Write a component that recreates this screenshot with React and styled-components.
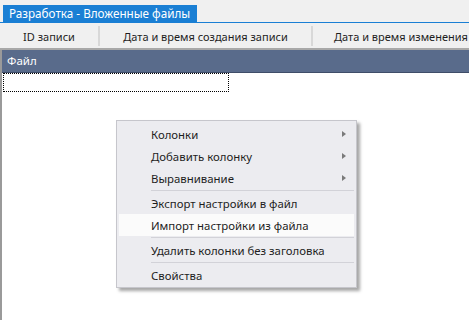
import React from "react";
import styled, { createGlobalStyle } from "styled-components";

const Global = createGlobalStyle`
  html, body { margin: 0; padding: 0; background: #ffffff; overflow: hidden; }
  * { box-sizing: border-box; }
  body { font-family: "Noto Sans", "Open Sans", sans-serif; }
`;

const Page = styled.div`
  position: relative;
  width: 469px;
  height: 320px;
  display: flex;
  flex-direction: column;
  overflow: hidden;
  font-size: 11.4px;
  color: #1e1e1e;
`;

const TabStrip = styled.div`
  height: 23px;
  flex: none;
  display: flex;
  align-items: flex-end;
  padding-left: 3px;
  background: #f0f0f0;
  border-bottom: 1px solid #1a7fd4;
`;

const Tab = styled.div`
  height: 17px;
  padding: 0 7px 0 6px;
  background: #1a7fd4;
  color: #ffffff;
  font-size: 11.7px;
  line-height: 17px;
  white-space: nowrap;
`;

const HeaderRow = styled.div`
  height: 27px;
  flex: none;
  display: flex;
  align-items: center;
  background: #f0f0f0;
  border-bottom: 2px solid #a8a8a8;
  overflow: hidden;
  font-size: 11px;
`;

const HeaderCell = styled.div`
  flex: none;
  width: ${(p) => p.$w}px;
  height: 20px;
  padding-top: 1px;
  line-height: 20px;
  text-align: center;
  white-space: nowrap;
  border-right: ${(p) => (p.$last ? "none" : "2px solid #d8d8d8")};
`;

const Body = styled.div`
  flex: 1;
  display: flex;
  flex-direction: column;
  background: #ffffff;
  border-left: 2px solid #9a9a9a;
`;

const GroupHeader = styled.div`
  height: 23px;
  flex: none;
  padding-left: 5px;
  line-height: 22px;
  font-size: 11.5px;
  background: #596b8b;
  color: #ffffff;
  border-bottom: 1px solid #3f4d68;
`;

const FocusRow = styled.div`
  margin-left: 1px;
  width: 226px;
  height: 19px;
  border: 1px dotted #000000;
`;

const Menu = styled.div`
  position: absolute;
  left: 116px;
  top: 120px;
  width: 241px;
  padding: 2px 2px 1px;
  background: #ececf0;
  border: 1px solid #c6c6cc;
  box-shadow: 3px 3px 3px rgba(0, 0, 0, 0.35);
`;

const Item = styled.div`
  height: 22px;
  display: flex;
  align-items: center;
  padding-left: 32px;
  padding-right: 8px;
  background: ${(p) => (p.$hot ? "#fbfbfb" : "transparent")};
  white-space: nowrap;
`;

const ItemLabel = styled.span`
  flex: 1;
`;

const Arrow = styled.span`
  width: 0;
  height: 0;
  border-top: 3.5px solid transparent;
  border-bottom: 3.5px solid transparent;
  border-left: 4px solid #7a7a7a;
`;

const Separator = styled.div`
  height: 3px;
  margin-left: 32px;
  display: flex;
  align-items: center;
  &::after {
    content: "";
    flex: 1;
    height: 1px;
    background: #d2d2d8;
  }
`;

const menuItems = [
  { label: "Колонки", sub: true },
  { label: "Добавить колонку", sub: true },
  { label: "Выравнивание", sub: true },
  { sep: true },
  { label: "Экспорт настройки в файл" },
  { label: "Импорт настройки из файла", hot: true },
  { sep: true },
  { label: "Удалить колонки без заголовка" },
  { sep: true },
  { label: "Свойства" },
];

export default function App() {
  return (
    <Page>
      <Global />
      <TabStrip>
        <Tab>Разработка - Вложенные файлы</Tab>
      </TabStrip>
      <HeaderRow>
        <HeaderCell $w={100}>ID записи</HeaderCell>
        <HeaderCell $w={213}>Дата и время создания записи</HeaderCell>
        <HeaderCell $w={176} $last>
          Дата и время изменения
        </HeaderCell>
      </HeaderRow>
      <Body>
        <GroupHeader>Файл</GroupHeader>
        <FocusRow />
      </Body>
      <Menu>
        {menuItems.map((m, i) =>
          m.sep ? (
            <Separator key={i} />
          ) : (
            <Item key={i} $hot={m.hot}>
              <ItemLabel>{m.label}</ItemLabel>
              {m.sub && <Arrow />}
            </Item>
          )
        )}
      </Menu>
    </Page>
  );
}
